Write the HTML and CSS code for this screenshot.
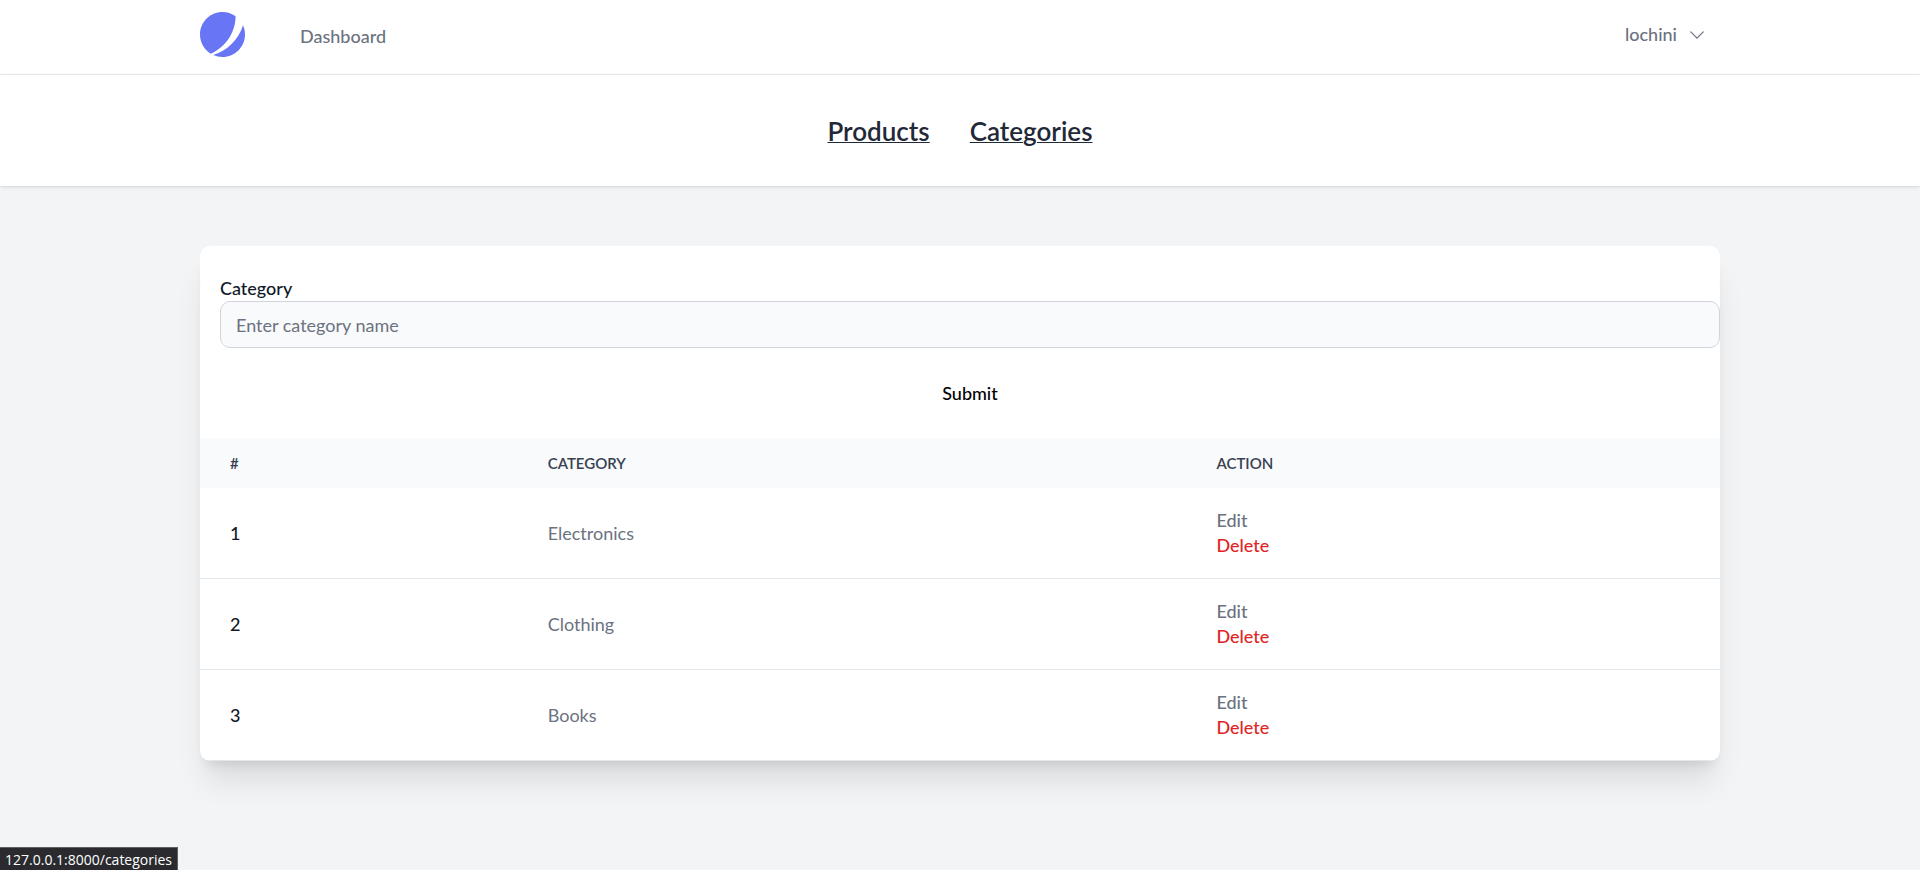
FILE: index.html
```html
<!DOCTYPE html>
<html lang="en">
<head>
<meta charset="utf-8">
<meta name="viewport" content="width=device-width, initial-scale=1">
<title>Categories</title>
<link rel="stylesheet" href="styles.css">
</head>
<body>
<nav class="navbar">
  <div class="container navbar-inner">
    <a class="logo" href="#" aria-label="Home">
      <svg viewBox="0 0 48 48" fill="none" aria-hidden="true">
        <path d="M11.395 44.428C4.557 40.198 0 32.632 0 24 0 10.745 10.745 0 24 0a23.891 23.891 0 0113.997 4.502c-.2 17.907-11.097 33.245-26.602 39.926z" fill="#6875F5"/>
        <path d="M14.134 45.885A23.914 23.914 0 0024 48c13.255 0 24-10.745 24-24 0-3.516-.756-6.856-2.115-9.866-4.659 15.143-16.608 27.092-31.75 31.751z" fill="#6875F5"/>
      </svg>
    </a>
    <a class="nav-link" href="#">Dashboard</a>
    <button class="user-menu" type="button">lochini
      <svg viewBox="0 0 24 24" fill="none" stroke="currentColor" stroke-width="1.5" aria-hidden="true"><path stroke-linecap="round" stroke-linejoin="round" d="M19.5 8.25l-7.5 7.5-7.5-7.5"/></svg>
    </button>
  </div>
</nav>
<header class="page-header">
  <a href="#">Products</a>
  <a href="#">Categories</a>
</header>
<main class="container">
  <div class="card">
    <div class="panel">
      <form class="category-form">
        <label for="category">Category</label>
        <input id="category" type="text" placeholder="Enter category name">
        <button type="button">Submit</button>
      </form>
      <table class="category-table">
        <thead>
          <tr><th class="col-id" scope="col">#</th><th class="col-name" scope="col">Category</th><th scope="col">Action</th></tr>
        </thead>
        <tbody>
          <tr><th scope="row">1</th><td>Electronics</td><td><a class="action" href="#">Edit</a><button class="action delete" type="button">Delete</button></td></tr>
          <tr><th scope="row">2</th><td>Clothing</td><td><a class="action" href="#">Edit</a><button class="action delete" type="button">Delete</button></td></tr>
          <tr><th scope="row">3</th><td>Books</td><td><a class="action" href="#">Edit</a><button class="action delete" type="button">Delete</button></td></tr>
        </tbody>
      </table>
    </div>
  </div>
</main>
<div class="status">127.0.0.1:8000/categories</div>
</body>
</html>
```
FILE: styles.css
```css
*, *::before, *::after { box-sizing: border-box; }

body {
  margin: 0;
  min-height: 100vh;
  background: #f3f4f6;
  color: #000;
  font: 500 18px/25px Lato, "Liberation Sans", sans-serif;
}

a { color: inherit; text-decoration: none; }

button {
  border: 0;
  padding: 0;
  background: none;
  color: inherit;
  font: inherit;
  cursor: pointer;
}

.container {
  max-width: 1600px;
  margin: 0 auto;
  padding: 0 40px;
}

.navbar {
  background: #fff;
  border-bottom: 1px solid #ebecef;
}

.navbar-inner {
  display: flex;
  align-items: center;
  padding-top: 12px;
  padding-bottom: 17px;
  color: #6b7280;
}

.logo svg { display: block; width: 45px; height: 45px; }

.nav-link { margin-left: 55px; padding-top: 3px; }

.user-menu {
  display: flex;
  align-items: center;
  gap: 10px;
  margin-left: auto;
  padding-right: 13px;
}

.user-menu svg { width: 20px; height: 20px; }

.page-header {
  display: flex;
  justify-content: center;
  gap: 40px;
  padding: 41px 40px 39px;
  background: #fff;
  box-shadow: 0 1px 4px rgba(0, 0, 0, 0.1), 0 1px 2px -1px rgba(0, 0, 0, 0.1);
  color: #1f2937;
  font-size: 26px;
  font-weight: 600;
  line-height: 31px;
}

.page-header a {
  text-decoration: underline;
  text-decoration-thickness: 1px;
}

main { padding-bottom: 60px; }

.card {
  margin-top: 60px;
  padding-top: 30px;
  overflow: hidden;
  border-radius: 10px;
  background: #fff;
  box-shadow: 0 25px 31px -6px rgba(0, 0, 0, 0.1), 0 10px 12px -7px rgba(0, 0, 0, 0.1);
}

.panel {
  border-radius: 10px;
  box-shadow: 0 5px 8px -1px rgba(0, 0, 0, 0.1), 0 2px 5px -2px rgba(0, 0, 0, 0.1);
}

.category-form {
  display: flex;
  flex-direction: column;
  padding-left: 20px;
}

.category-form label { color: #111827; }

.category-form input {
  width: 100%;
  height: 47px;
  padding: 0 15px;
  border: 1px solid #d1d5db;
  border-radius: 10px;
  background: #f9fafb;
  color: #111827;
  font: inherit;
  font-weight: 400;
}

.category-form input::placeholder { color: #6b7280; opacity: 1; }

.category-form button { padding: 33px 0 32px; }

.category-table {
  width: 100%;
  border-collapse: collapse;
  color: #6b7280;
  font-weight: 400;
  text-align: left;
}

.category-table th, .category-table td { padding: 20px 30px; }

.category-table thead { background: #f9fafb; }

.category-table thead th {
  padding: 15px 30px;
  color: #374151;
  font-size: 15px;
  font-weight: 600;
  line-height: 20px;
  text-transform: uppercase;
}

.category-table .col-id { width: 20.9%; }
.category-table .col-name { width: 44%; }

.category-table tbody tr { border-bottom: 1px solid #e5e7eb; }

.category-table tbody th { color: #111827; font-weight: 500; }

.action { display: block; font-weight: 500; }

.delete { color: #e02424; }

.status {
  position: fixed;
  bottom: 0;
  left: 0;
  padding: 2px 5px 0;
  border: 1px solid #606064;
  border-width: 1px 1px 0 0;
  background: #2b2b2f;
  color: #fff;
  font: 14px/20px "Open Sans", "Noto Sans", sans-serif;
}
```
